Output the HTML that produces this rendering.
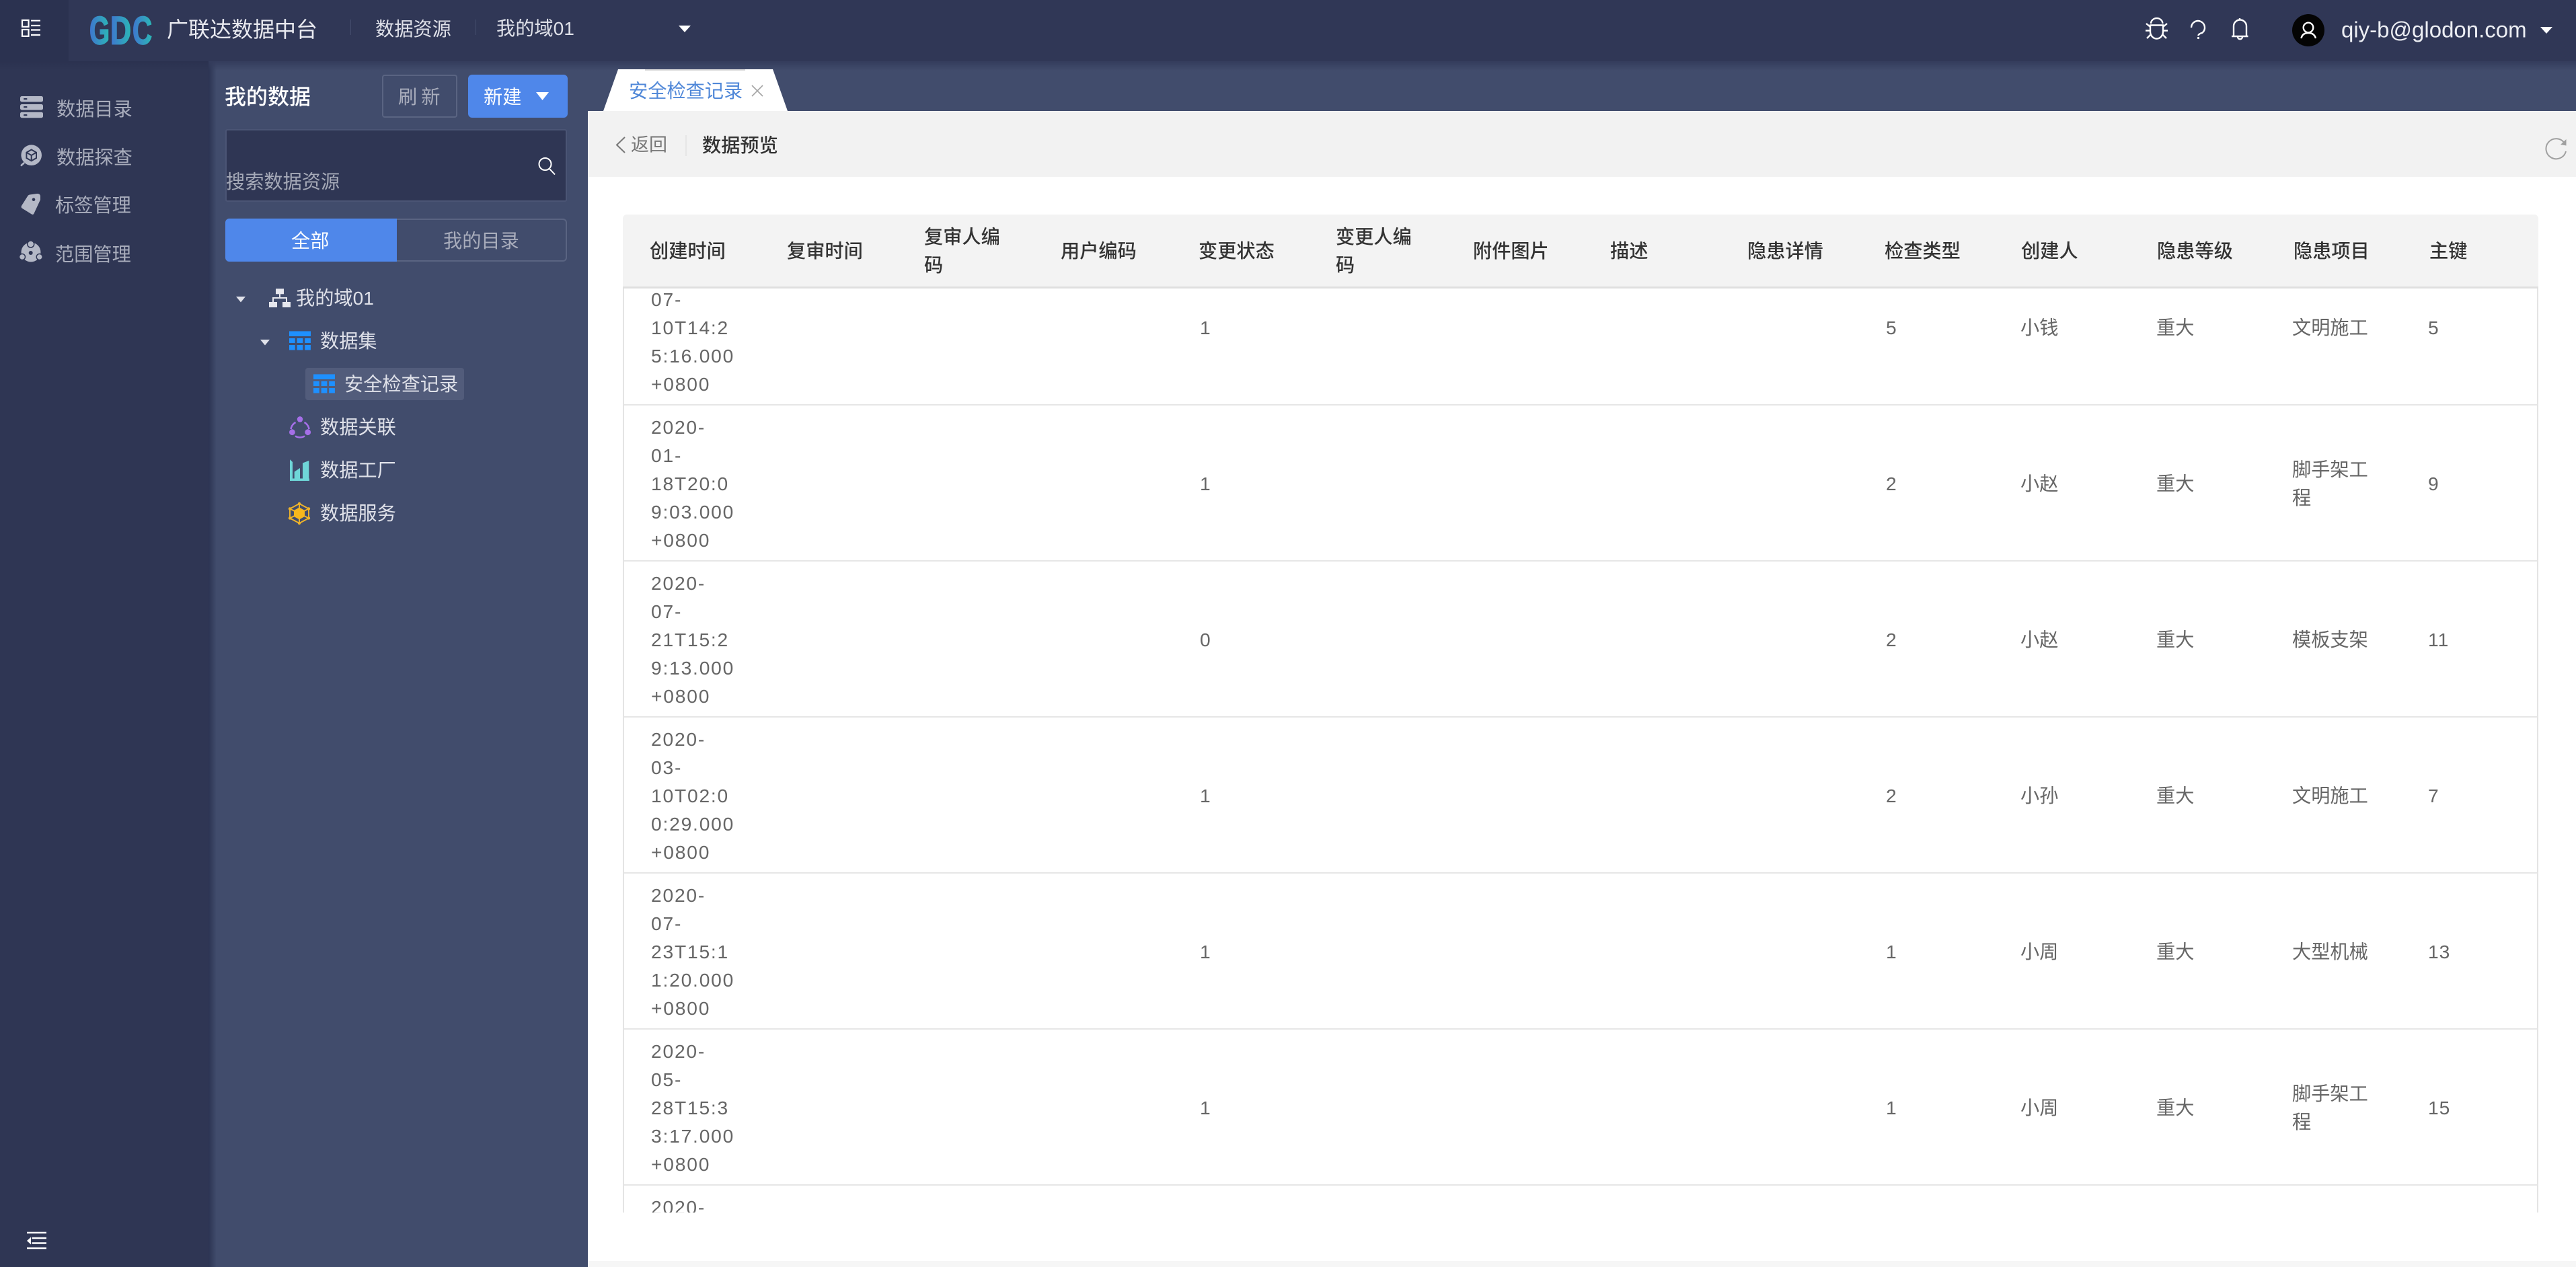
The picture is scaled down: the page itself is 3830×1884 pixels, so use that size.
<!DOCTYPE html>
<html lang="zh-CN"><head><meta charset="utf-8"><title>数据预览</title>
<style>
html,body{margin:0;padding:0}
body{width:3830px;height:1884px;overflow:hidden;position:relative;background:#fff;font-family:"Liberation Sans","Noto Sans CJK SC",sans-serif;font-size:28.2px;color:#666}
.a{position:absolute}
.t{position:absolute;white-space:nowrap;line-height:1;transform:translateY(-50%)}
.nav{color:#a9adbc}
.tr{color:#dfe1e9}
.h{position:absolute;top:320px;height:106px;display:flex;align-items:center;line-height:42px;color:#333;font-weight:500;white-space:nowrap}
#body{position:absolute;left:0;top:429px;width:3830px;height:1374px;overflow:hidden}
.r{position:absolute;left:0;width:3830px;height:236px}
.r b{position:absolute;font-weight:400;top:0;height:236px;display:flex;align-items:center;line-height:42px;white-space:nowrap;color:#666}
.r b.d{letter-spacing:1.8px}
.c1{left:968px}.c2{left:1784px;letter-spacing:1px}.c3{left:2804px;letter-spacing:1px}.c4{left:3004px}.c5{left:3206px}.c6{left:3408px}.c7{left:3610px;letter-spacing:1px}
.l{position:absolute;left:926px;width:2848px;height:2px;background:#e6e6e6}
</style></head>
<body>
<!-- top bar -->
<div class="a" style="left:0;top:0;width:3830px;height:91px;background:#303756"></div>
<div class="a" style="left:0;top:0;width:102px;height:91px;background:#2b3250"></div>
<!-- side -->
<div class="a" style="left:0;top:91px;width:312px;height:1793px;background:#2f3654"></div>
<div class="a" style="left:312px;top:91px;width:562px;height:1793px;background:#414c6c"></div>
<div class="a" style="left:310px;top:91px;width:12px;height:1793px;background:linear-gradient(90deg,#2c3453,#414c6c)"></div>
<div class="a" style="left:874px;top:91px;width:2956px;height:74px;background:#414c6c"></div>
<div class="a" style="left:0;top:91px;width:3830px;height:14px;background:linear-gradient(180deg,#343c5c,rgba(65,76,108,0))"></div>
<div class="a" style="left:0;top:91px;width:310px;height:14px;background:linear-gradient(180deg,#2b3250,#2f3654)"></div>
<!-- main -->
<div class="a" style="left:874px;top:165px;width:2956px;height:98px;background:#f2f2f2"></div>
<div class="a" style="left:874px;top:263px;width:2956px;height:1612px;background:#fff"></div>
<div class="a" style="left:874px;top:1875px;width:2956px;height:9px;background:#f6f6f6"></div>
<div class="a" style="left:1019px;top:201px;width:2px;height:31px;background:#e6e6e6"></div>

<!-- header text -->
<div class="t" style="left:248px;top:44px;font-size:32px;color:#e9eaf0">广联达数据中台</div>
<div class="a" style="left:521px;top:29px;width:1px;height:23px;background:#454d6d"></div>
<div class="t" style="left:558px;top:43px;color:#dfe1e9">数据资源</div>
<div class="a" style="left:707px;top:29px;width:1px;height:23px;background:#454d6d"></div>
<div class="t" style="left:738px;top:42px;color:#dfe1e9">我的域01</div>
<div class="t" style="left:3481px;top:44px;font-size:33px;color:#eceef3">qiy-b@glodon.com</div>

<!-- left nav text -->
<div class="t nav" style="left:84px;top:162px">数据目录</div>
<div class="t nav" style="left:84px;top:234px">数据探查</div>
<div class="t nav" style="left:82px;top:305px">标签管理</div>
<div class="t nav" style="left:82px;top:378px">范围管理</div>

<!-- panel -->
<div class="t" style="left:334px;top:144px;font-size:32px;font-weight:500;color:#fff">我的数据</div>
<div class="a" style="left:568px;top:111px;width:108px;height:60px;border:2px solid #5a6482;border-radius:4px"></div>
<div class="t nav" style="left:592px;top:144px;letter-spacing:6px">刷新</div>
<div class="a" style="left:696px;top:111px;width:148px;height:64px;border-radius:6px;background:#4f87ea"></div>
<div class="t" style="left:719px;top:144px;color:#fff">新建</div>
<div class="a" style="left:335px;top:192px;width:504px;height:104px;background:#2f3654;border:2px solid #4b5575;border-radius:3px"></div>
<div class="t" style="left:336px;top:270px;color:#a5a9b7">搜索数据资源</div>
<div class="a" style="left:335px;top:325px;width:504px;height:60px;border:2px solid #5a6482;border-radius:6px"></div>
<div class="a" style="left:335px;top:325px;width:255px;height:64px;background:#4f87ea;border-radius:6px 0 0 6px"></div>
<div class="t" style="left:433px;top:358px;color:#fff">全部</div>
<div class="t nav" style="left:659px;top:358px">我的目录</div>

<!-- tree -->
<div class="t tr" style="left:440px;top:443px">我的域01</div>
<div class="t tr" style="left:476px;top:507px">数据集</div>
<div class="a" style="left:454px;top:547px;width:236px;height:48px;background:#525c7b;border-radius:4px"></div>
<div class="t tr" style="left:512px;top:571px">安全检查记录</div>
<div class="t tr" style="left:476px;top:635px">数据关联</div>
<div class="t tr" style="left:476px;top:699px">数据工厂</div>
<div class="t tr" style="left:476px;top:763px">数据服务</div>

<!-- tab shapes -->
<svg class="a" style="left:0;top:0" width="3830" height="200" viewBox="0 0 3830 200">
<polygon points="897,165 919,103 1149,103 1171,165" fill="#fff"/>
<rect x="959" y="103" width="149" height="2" fill="#d9d9d9"/>
</svg>
<div class="t" style="left:935px;top:135px;color:#4f87d8">安全检查记录</div>
<div class="t" style="left:938px;top:216px;font-size:27px;color:#777">返回</div>
<div class="t" style="left:1044px;top:216px;color:#333;font-weight:500">数据预览</div>

<!-- table header -->
<div class="a" style="left:926px;top:319px;width:2848px;height:107px;background:#f3f3f3;border-radius:6px 6px 0 0"></div>
<div class="a" style="left:926px;top:426px;width:2848px;height:3px;background:#dfdfdf"></div>
<div class="h" style="left:966px">创建时间</div>
<div class="h" style="left:1170px">复审时间</div>
<div class="h" style="left:1374px">复审人编<br>码</div>
<div class="h" style="left:1577px">用户编码</div>
<div class="h" style="left:1782px">变更状态</div>
<div class="h" style="left:1986px">变更人编<br>码</div>
<div class="h" style="left:2190px">附件图片</div>
<div class="h" style="left:2394px">描述</div>
<div class="h" style="left:2598px">隐患详情</div>
<div class="h" style="left:2802px">检查类型</div>
<div class="h" style="left:3005px">创建人</div>
<div class="h" style="left:3207px">隐患等级</div>
<div class="h" style="left:3410px">隐患项目</div>
<div class="h" style="left:3612px">主键</div>

<!-- table body -->
<div id="body">
<div class="r" style="top:-60px"><b class="d c1"><span>2020-<br>07-<br>10T14:2<br>5:16.000<br>+0800</span></b><b class="c2">1</b><b class="c3">5</b><b class="c4">小钱</b><b class="c5">重大</b><b class="c6">文明施工</b><b class="c7">5</b></div>
<div class="r" style="top:172px"><b class="d c1"><span>2020-<br>01-<br>18T20:0<br>9:03.000<br>+0800</span></b><b class="c2">1</b><b class="c3">2</b><b class="c4">小赵</b><b class="c5">重大</b><b class="c6"><span>脚手架工<br>程</span></b><b class="c7">9</b></div>
<div class="r" style="top:404px"><b class="d c1"><span>2020-<br>07-<br>21T15:2<br>9:13.000<br>+0800</span></b><b class="c2">0</b><b class="c3">2</b><b class="c4">小赵</b><b class="c5">重大</b><b class="c6">模板支架</b><b class="c7">11</b></div>
<div class="r" style="top:636px"><b class="d c1"><span>2020-<br>03-<br>10T02:0<br>0:29.000<br>+0800</span></b><b class="c2">1</b><b class="c3">2</b><b class="c4">小孙</b><b class="c5">重大</b><b class="c6">文明施工</b><b class="c7">7</b></div>
<div class="r" style="top:868px"><b class="d c1"><span>2020-<br>07-<br>23T15:1<br>1:20.000<br>+0800</span></b><b class="c2">1</b><b class="c3">1</b><b class="c4">小周</b><b class="c5">重大</b><b class="c6">大型机械</b><b class="c7">13</b></div>
<div class="r" style="top:1100px"><b class="d c1"><span>2020-<br>05-<br>28T15:3<br>3:17.000<br>+0800</span></b><b class="c2">1</b><b class="c3">1</b><b class="c4">小周</b><b class="c5">重大</b><b class="c6"><span>脚手架工<br>程</span></b><b class="c7">15</b></div>
<div class="r" style="top:1345px;height:29px;overflow:hidden"><b class="d c1" style="height:42px">2020-</b></div>
</div>
<div class="l" style="top:601px"></div><div class="l" style="top:833px"></div><div class="l" style="top:1065px"></div><div class="l" style="top:1297px"></div><div class="l" style="top:1529px"></div><div class="l" style="top:1761px"></div>
<div class="a" style="left:926px;top:429px;width:2px;height:1374px;background:#e4e4e4"></div>
<div class="a" style="left:3772px;top:429px;width:2px;height:1374px;background:#e4e4e4"></div>

<!-- icons overlay -->
<svg class="a" style="left:0;top:0" width="3830" height="1884" viewBox="0 0 3830 1884" fill="none">
<defs>
<linearGradient id="lg" x1="0" y1="0" x2="1" y2="0"><stop offset="0" stop-color="#3f74cf"/><stop offset="1" stop-color="#2bb8b6"/></linearGradient>
<g id="tb" fill="#1e90ff"><rect x="430" y="492.5" width="32" height="7.5"/><rect x="430" y="503" width="8.7" height="7"/><rect x="441.6" y="503" width="8.7" height="7"/><rect x="453.2" y="503" width="8.7" height="7"/><rect x="430" y="513" width="8.7" height="7.5"/><rect x="441.6" y="513" width="8.7" height="7.5"/><rect x="453.2" y="513" width="8.7" height="7.5"/></g>
</defs>
<!-- top-left menu -->
<g stroke="#fff" stroke-width="2.2"><rect x="33" y="30" width="9.5" height="9.8"/><rect x="33" y="44" width="9.5" height="9.8"/><path d="M46 30.7H60M46 38H60M46 44.5H60M46 52H60"/></g>
<!-- logo -->
<g font-family="Liberation Sans,sans-serif" font-weight="700" fill="url(#lg)" font-size="58">
<text x="133" y="65.5" textLength="30" lengthAdjust="spacingAndGlyphs" stroke="url(#lg)" stroke-width="1.8">G</text>
<text x="164" y="65.5" textLength="31" lengthAdjust="spacingAndGlyphs" stroke="url(#lg)" stroke-width="1.8">D</text>
<text x="197" y="65.5" textLength="29" lengthAdjust="spacingAndGlyphs" stroke="url(#lg)" stroke-width="1.8">C</text>
</g>
<!-- header arrows -->
<polygon points="1009,38 1027,38 1018,48" fill="#fff"/>
<polygon points="3777,40 3795,40 3786,50" fill="#fff"/>
<polygon points="797,137 816,137 806.5,149" fill="#fff"/>
<polygon points="351,441 365,441 358,449.5" fill="#e0e2ea"/>
<polygon points="387,505 401,505 394,513.5" fill="#e0e2ea"/>
<!-- nav icons -->
<g fill="#b4b8c6"><rect x="30" y="143" width="34" height="8.5" rx="2.5"/><rect x="30" y="155" width="34" height="8.5" rx="2.5"/><rect x="30" y="166.7" width="34" height="8.5" rx="2.5"/></g>
<g fill="#2f3654"><rect x="35" y="146" width="5.5" height="2.2" rx="1"/><rect x="35" y="158" width="5.5" height="2.2" rx="1"/><rect x="35" y="170" width="5.5" height="2.2" rx="1"/></g>
<circle cx="46.7" cy="230.7" r="15.3" fill="#b4b8c6"/>
<path d="M36 242L31 246.5" stroke="#b4b8c6" stroke-width="2.6"/>
<path d="M46.7 222.5L54 226.7V235L46.7 239.2L39.4 235V226.7ZM39.4 226.7L46.7 231L54 226.7M46.7 231V239" stroke="#2f3654" stroke-width="2"/>
<path d="M55 288 Q59 287.5 60 291 L60 297 L50.5 317.5 Q49.5 320 47 318.5 L32.5 309.5 Q31 308 32 306 L41.5 291 Q42.5 289.7 44 289.5Z" fill="#b4b8c6"/>
<circle cx="50" cy="296.7" r="2.3" fill="#2f3654"/>
<circle cx="46" cy="375" r="14.5" fill="#b4b8c6"/>
<circle cx="45.7" cy="363" r="5" fill="#b4b8c6" stroke="#2f3654" stroke-width="1.5"/>
<circle cx="33" cy="382" r="4.5" fill="#b4b8c6" stroke="#2f3654" stroke-width="1.5"/>
<circle cx="58.7" cy="382" r="4.5" fill="#b4b8c6" stroke="#2f3654" stroke-width="1.5"/>
<circle cx="45.7" cy="376" r="3" fill="#2f3654"/>
<!-- search -->
<ellipse cx="810.5" cy="244" rx="9" ry="9" stroke="#fff" stroke-width="2"/><path d="M817 251L825 259.5" stroke="#fff" stroke-width="2"/>
<!-- tree icons -->
<g fill="#e6e7ee"><rect x="410" y="429.3" width="12" height="8"/><rect x="400" y="449" width="12" height="8"/><rect x="420" y="449" width="12" height="8"/></g>
<path d="M416 437V443M406 449V443H426V449" stroke="#e6e7ee" stroke-width="2"/>
<use href="#tb"/>
<use href="#tb" x="36" y="64"/>
<g stroke="#a56fe8" stroke-width="2.6"><path d="M439.5 628A14 14 0 0 0 432.5 638"/><path d="M452.5 628A14 14 0 0 1 459.5 638"/><path d="M439 648.5A14 14 0 0 0 453 648.5"/></g>
<g fill="#a56fe8"><ellipse cx="446" cy="623.5" rx="4.2" ry="4.4"/><circle cx="434.4" cy="642.7" r="4.4"/><circle cx="457.7" cy="642.7" r="4.4"/></g>
<g fill="#6fd6d8"><rect x="431" y="711.5" width="29" height="3.5"/><polygon points="431,683.3 435,687 435,715 431,715"/><polygon points="437.7,701.5 446,696 446,715 437.7,715"/><polygon points="450,688.5 459.3,685 459.3,715 450,715"/></g>
<g stroke="#f0b429" stroke-width="1.9"><polygon points="445,749 459,756.5 459,770.5 445,778 431,770.5 431,756.5"/><path d="M445 749V778M431 756.5L459 770.5M459 756.5L431 770.5"/></g>
<polygon points="445,754.5 453,759 453,768 445,772.5 437,768 437,759" fill="#f7b71d"/>
<g fill="#f0b429"><circle cx="445" cy="749" r="2.2"/><circle cx="445" cy="778" r="2.2"/><circle cx="431" cy="756.5" r="2.2"/><circle cx="459" cy="756.5" r="2.2"/><circle cx="431" cy="770.5" r="2.2"/><circle cx="459" cy="770.5" r="2.2"/></g>
<!-- header right icons -->
<g stroke="#fff" stroke-width="2.4">
<path d="M3198 35A8.7 8 0 0 1 3215.4 35"/>
<path d="M3197 37.5H3216V47A9.5 10.5 0 0 1 3197 47Z"/>
<path d="M3191 35L3197 40M3190 45.5H3197M3192 57L3198 51M3222 35L3216 40M3223 45.5H3216M3221 57L3215 51"/>
<path d="M3258 41A10 10 0 1 1 3274.5 48.7Q3268.5 50.5 3268.5 53"/>
<path d="M3321 54V39A9.5 9.5 0 0 1 3340 39V54M3318 54H3342.5M3330 27V30M3327 55A3.5 3.2 0 0 0 3334 55"/>
</g>
<circle cx="3268.5" cy="56.5" r="1.6" fill="#fff"/>
<circle cx="3432" cy="45" r="24" fill="#040404"/>
<circle cx="3432" cy="41" r="7.3" stroke="#fff" stroke-width="2.4"/>
<path d="M3421.5 57Q3423 49 3432 49Q3441 49 3443 57" stroke="#fff" stroke-width="2.4"/>
<!-- tab close / back / refresh -->
<path d="M1118 127L1134 143M1134 127L1118 143" stroke="#a5a5a5" stroke-width="1.6"/>
<path d="M929 204L917 215.5L929 227" stroke="#777" stroke-width="2"/>
<path d="M3813 213A15 15 0 1 0 3815 225" stroke="#a0a0a0" stroke-width="2"/>
<polygon points="3815.5,207 3815.5,216.5 3807,215" fill="#a0a0a0"/>
<!-- collapse -->
<path d="M40 1833H69M47.5 1841H69M47.5 1848.5H69M40 1856H69" stroke="#fff" stroke-width="2.4"/>
<polygon points="46,1839.5 46,1850.5 40,1845" fill="#fff"/>
</svg>
</body></html>
